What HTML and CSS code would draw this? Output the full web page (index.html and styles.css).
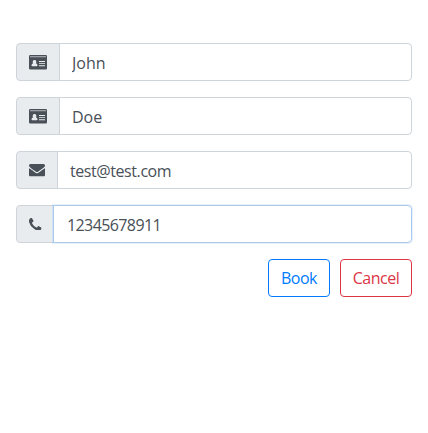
FILE: index.html
```html
<!DOCTYPE html>
<html lang="en">
<head>
<meta charset="utf-8">
<title>Book</title>
<link rel="stylesheet" href="styles.css">
</head>
<body>
<svg class="defs" aria-hidden="true">
  <symbol id="card" viewBox="0 0 18 15"><path fill-rule="evenodd" d="M1.200 0h15.600q1.200 0 1.200 1.200v12.100q0 1.200-1.200 1.200H1.200q-1.200 0-1.200-1.200V1.200Q0 0 1.200 0zM5.500 5A1.700 1.800 0 0 0 4.300 8.200Q2.500 8.600 2.500 10.500q0 .8.900.8h4.200q.9 0 .9-.8 0-1.900-1.800-2.300A1.700 1.800 0 0 0 5.500 5zM10 6v1h6V6zM10 8.200v.9h6v-.9zM10 10.300v1h6v-1z"/><path fill="#9aa0a5" d="M1 1h16v1.300H1z"/></symbol>
  <symbol id="mail" viewBox="0 0 1792 1408"><path d="M1792 454v794q0 66-47 113t-113 47h-1472q-66 0-113-47t-47-113v-794q44 49 101 87 362 246 497 345 57 42 92.500 65.500t94.500 48 110 24.500h2q51 0 110-24.500t94.500-48 92.500-65.500q170-123 498-345 57-39 100-87zM1792 160q0 79-49 151t-122 123q-376 261-468 325-10 7-42.500 30.500t-54 38-52 32.500-57.500 27-50 9h-2q-23 0-50-9t-57.500-27-52-32.500-54-38-42.500-30.500q-91-64-262-182.500t-205-142.500q-62-42-117-115.500t-55-136.500q0-78 41.500-130t118.500-52h1472q65 0 112.500 47t47.500 113z"/></symbol>
  <symbol id="phone" viewBox="0 0 1408 1408"><path d="M1408 1112q0 27-10 70.500t-21 68.500q-21 50-122 106-94 51-186 51-27 0-52.500-3.500t-57.500-12.500-47.500-14.500-55.500-20.500-49-18q-98-35-175-83-128-79-264.500-215.500t-215.500-264.500q-48-77-83-175-3-9-18-49t-20.500-55.500-14.500-47.500-12.500-57.500-3.500-52.500q0-92 51-186 56-101 106-122 25-11 68.500-21t70.500-10q14 0 21 3 18 6 53 76 11 19 30 54t35 63.500 31 53.500q3 4 17.500 25t21.500 35.500 7 28.500q0 20-28.500 50t-62 55-62 53-28.500 46q0 9 5 22.500t8.500 20.500 14 24 11.500 19q76 137 174 235t235 174q2 1 19 11.500t24 14 20.500 8.500 22.500 5q18 0 46-28.500t53-62 55-62 50-28.500q14 0 28.500 7t35.500 21.500 25 17.500q25 15 53.500 31t63.500 35 54 30q70 35 76 53 3 7 3 21z"/></symbol>
</svg>
<form class="form">
  <div class="group">
    <span class="addon"><svg class="icon icon-card"><use href="#card"/></svg></span>
    <input class="control first" type="text" value="John">
  </div>
  <div class="group">
    <span class="addon"><svg class="icon icon-card"><use href="#card"/></svg></span>
    <input class="control last" type="text" value="Doe">
  </div>
  <div class="group">
    <span class="addon"><svg class="icon icon-mail"><use href="#mail"/></svg></span>
    <input class="control email" type="text" value="test@test.com">
  </div>
  <div class="group">
    <span class="addon addon-phone"><svg class="icon icon-phone"><use href="#phone"/></svg></span>
    <input class="control tel focused" type="text" value="12345678911">
  </div>
  <div class="actions">
    <button class="btn book" type="button">Book</button>
    <button class="btn cancel" type="button">Cancel</button>
  </div>
</form>
</body>
</html>
```

FILE: styles.css
```css
* { box-sizing: border-box; }
body { margin: 0; background: #fff; font: 370 16px/24px "Open Sans", "Noto Sans", sans-serif; color: #495057; }
.defs { display: none; }
.form { display: flex; flex-direction: column; gap: 16px; padding: 43px 16px 0; }
.group { display: flex; height: 38px; }
.addon { display: flex; align-items: center; flex: none; padding: 0 12px; background: #e9ecef; border: 1px solid #ced4da; border-radius: 4px 0 0 4px; }
.addon:has(.icon-card) { width: 44px; }
.addon-phone { width: 38px; }
.icon { display: block; flex: none; fill: #495057; }
.icon-card { width: 18px; height: 15px; }
.icon-mail { width: 16px; height: 12.57px; margin-top: 1px; }
.icon-phone { width: 12.57px; height: 12.57px; }
.control { flex: 1; min-width: 0; margin: 0 0 0 -1px; padding: 7px 12px 5px; font: inherit; color: #495057; background: #fff; border: 1px solid #ced4da; border-radius: 0 4px 4px 0; outline: 0; }
.email { letter-spacing: -.42px; }
.tel { padding-left: 13px; letter-spacing: -.6px; }
.focused { border-color: #a9c9ea; box-shadow: 0 0 0 1px rgba(0, 123, 255, .09); }
.actions { display: flex; justify-content: flex-end; gap: 10px; }
.btn { height: 38px; margin: 0; padding: 0; font: inherit; letter-spacing: -.5px; background: #fff; border: 1px solid; border-radius: 4px; }
.book { width: 62px; color: #007bff; }
.cancel { width: 72px; color: #dc3545; }
```
